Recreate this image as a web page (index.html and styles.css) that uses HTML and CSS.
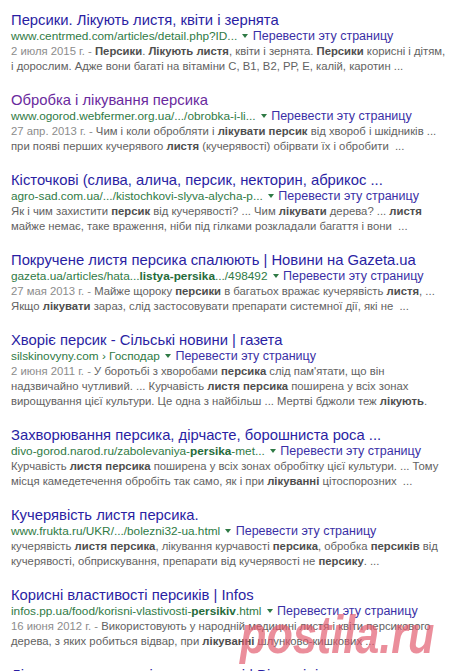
FILE: index.html
```html
<!DOCTYPE html>
<html lang="uk">
<head>
  <meta charset="UTF-8" />
  <meta name="viewport" content="width=device-width, initial-scale=1.0"/>
  <title>персик листя лікувати - Поиск</title>
  <link rel="stylesheet" href="styles.css">
</head>
<body>
  <div class="results">

    <div class="res">
      <a class="title" href="#">Персики. Лікують листя, квіти і зернята</a>
      <div class="url">www.centrmed.com/articles/detail.php?ID... <span class="arrow"></span> <a class="tr" href="#">Перевести эту страницу</a></div>
      <div class="snip"><span class="date">2 июля 2015 г. - </span><b>Персики</b>. <b>Лікують листя</b>, квіти і зернята. <b>Персики</b> корисні і дітям,<br>і дорослим. Адже вони багаті на вітаміни С, В1, В2, РР, Е, калій, каротин ...</div>
    </div>

    <div class="res">
      <a class="title visited" href="#">Обробка і лікування персика</a>
      <div class="url">www.ogorod.webfermer.org.ua/.../obrobka-i-li... <span class="arrow"></span> <a class="tr" href="#">Перевести эту страницу</a></div>
      <div class="snip"><span class="date">27 апр. 2013 г. - </span>Чим і коли обробляти і <b>лікувати персик</b> від хвороб і шкідників ...<br>при появі перших кучерявого <b>листя</b> (кучерявості) обірвати їх і обробити &nbsp;...</div>
    </div>

    <div class="res">
      <a class="title" href="#">Кісточкові (слива, алича, персик, некторин, абрикос ...</a>
      <div class="url">agro-sad.com.ua/.../kistochkovi-slyva-alycha-p... <span class="arrow"></span> <a class="tr" href="#">Перевести эту страницу</a></div>
      <div class="snip">Як і чим захистити <b>персик</b> від кучерявості? ... Чим <b>лікувати</b> дерева? ... <b>листя</b><br>майже немає, таке враження, ніби під гілками розкладали багаття і вони &nbsp;...</div>
    </div>

    <div class="res">
      <a class="title" href="#">Покручене листя персика спалюють | Новини на Gazeta.ua</a>
      <div class="url">gazeta.ua/articles/hata...<b>listya-persika</b>.../498492 <span class="arrow"></span> <a class="tr" href="#">Перевести эту страницу</a></div>
      <div class="snip"><span class="date">27 мая 2013 г. - </span>Майже щороку <b>персики</b> в багатьох вражає кучерявість <b>листя</b>, ...<br>Якщо <b>лікувати</b> зараз, слід застосовувати препарати системної дії, які не &nbsp;...</div>
    </div>

    <div class="res">
      <a class="title" href="#">Хворіє персик - Сільські новини | газета</a>
      <div class="url">silskinovyny.com › Господар <span class="arrow"></span> <a class="tr" href="#">Перевести эту страницу</a></div>
      <div class="snip"><span class="date">2 июня 2011 г. - </span>У боротьбі з хворобами <b>персика</b> слід пам'ятати, що він<br>надзвичайно чутливий. ... Курчавість <b>листя персика</b> поширена у всіх зонах<br>вирощування цієї культури. Це одна з найбільш ... Мертві бджоли теж <b>лікують</b>.</div>
    </div>

    <div class="res">
      <a class="title" href="#">Захворювання персика, дірчасте, борошниста роса ...</a>
      <div class="url">divo-gorod.narod.ru/zabolevaniya-<b>persika</b>-met... <span class="arrow"></span> <a class="tr" href="#">Перевести эту страницу</a></div>
      <div class="snip">Курчавість <b>листя персика</b> поширена у всіх зонах обробітку цієї культури. ... Тому<br>місця камедетечення обробіть так само, як і при <b>лікуванні</b> цітоспорозних &nbsp;...</div>
    </div>

    <div class="res">
      <a class="title" href="#">Кучерявість листя персика.</a>
      <div class="url">www.frukta.ru/UKR/.../bolezni32-ua.html <span class="arrow"></span> <a class="tr" href="#">Перевести эту страницу</a></div>
      <div class="snip">кучерявість <b>листя персика</b>, лікування курчавості <b>персика</b>, обробка <b>персиків</b> від<br>кучерявості, обприскування, препарати від кучерявості не <b>персику</b>. ...</div>
    </div>

    <div class="res">
      <a class="title" href="#">Корисні властивості персиків | Infos</a>
      <div class="url">infos.pp.ua/food/korisni-vlastivosti-<b>persikiv</b>.html <span class="arrow"></span> <a class="tr" href="#">Перевести эту страницу</a></div>
      <div class="snip"><span class="date">16 июня 2012 г. - </span>Використовують у народній медицині листя і квіти персикового<br>дерева, з яких робиться відвар, при <b>лікуванні</b> шлунково-кишкових ...</div>
    </div>

    <div class="res">
      <a class="title" href="#">Лікування персика від кучерявості | Відповіді на питання</a>
    </div>

  </div>

  <div class="watermark">postila.ru</div>
</body>
</html>
```

FILE: styles.css
```css
body {
  margin: 0;
  background: #fff;
  font-family: "Liberation Sans", Arial, sans-serif;
  overflow: hidden;
}
.results {
  padding: 12px 0 0 11px;
}
.res {
  margin-bottom: 18px;
}
.title {
  display: block;
  font-size: 14.8px;
  line-height: 16px;
  color: #2a1ea3;
  text-decoration: none;
  white-space: nowrap;
}
.title.visited {
  color: #6a2a9e;
}
.url {
  font-size: 11.8px;
  line-height: 16px;
  color: #2f7a45;
  white-space: nowrap;
}
.url b {
  color: #256b3a;
}
.arrow {
  display: inline-block;
  width: 0;
  height: 0;
  margin: 0 1px 2px 2px;
  border-left: 3px solid transparent;
  border-right: 3px solid transparent;
  border-top: 4px solid #2f7a45;
  vertical-align: middle;
}
.tr {
  font-size: 12.5px;
  color: #3a2fa6;
  text-decoration: none;
}
.snip {
  font-size: 11.3px;
  line-height: 15px;
  color: #626262;
  white-space: nowrap;
}
.snip b {
  color: #4e4e4e;
}
.date {
  color: #8c8c8c;
}
.watermark {
  position: absolute;
  left: 240px;
  top: 607px;
  font-size: 54px;
  line-height: 1;
  font-weight: bold;
  font-style: italic;
  color: rgba(226, 88, 108, 0.68);
  transform: scaleX(0.8);
  transform-origin: left top;
  white-space: nowrap;
}
```
